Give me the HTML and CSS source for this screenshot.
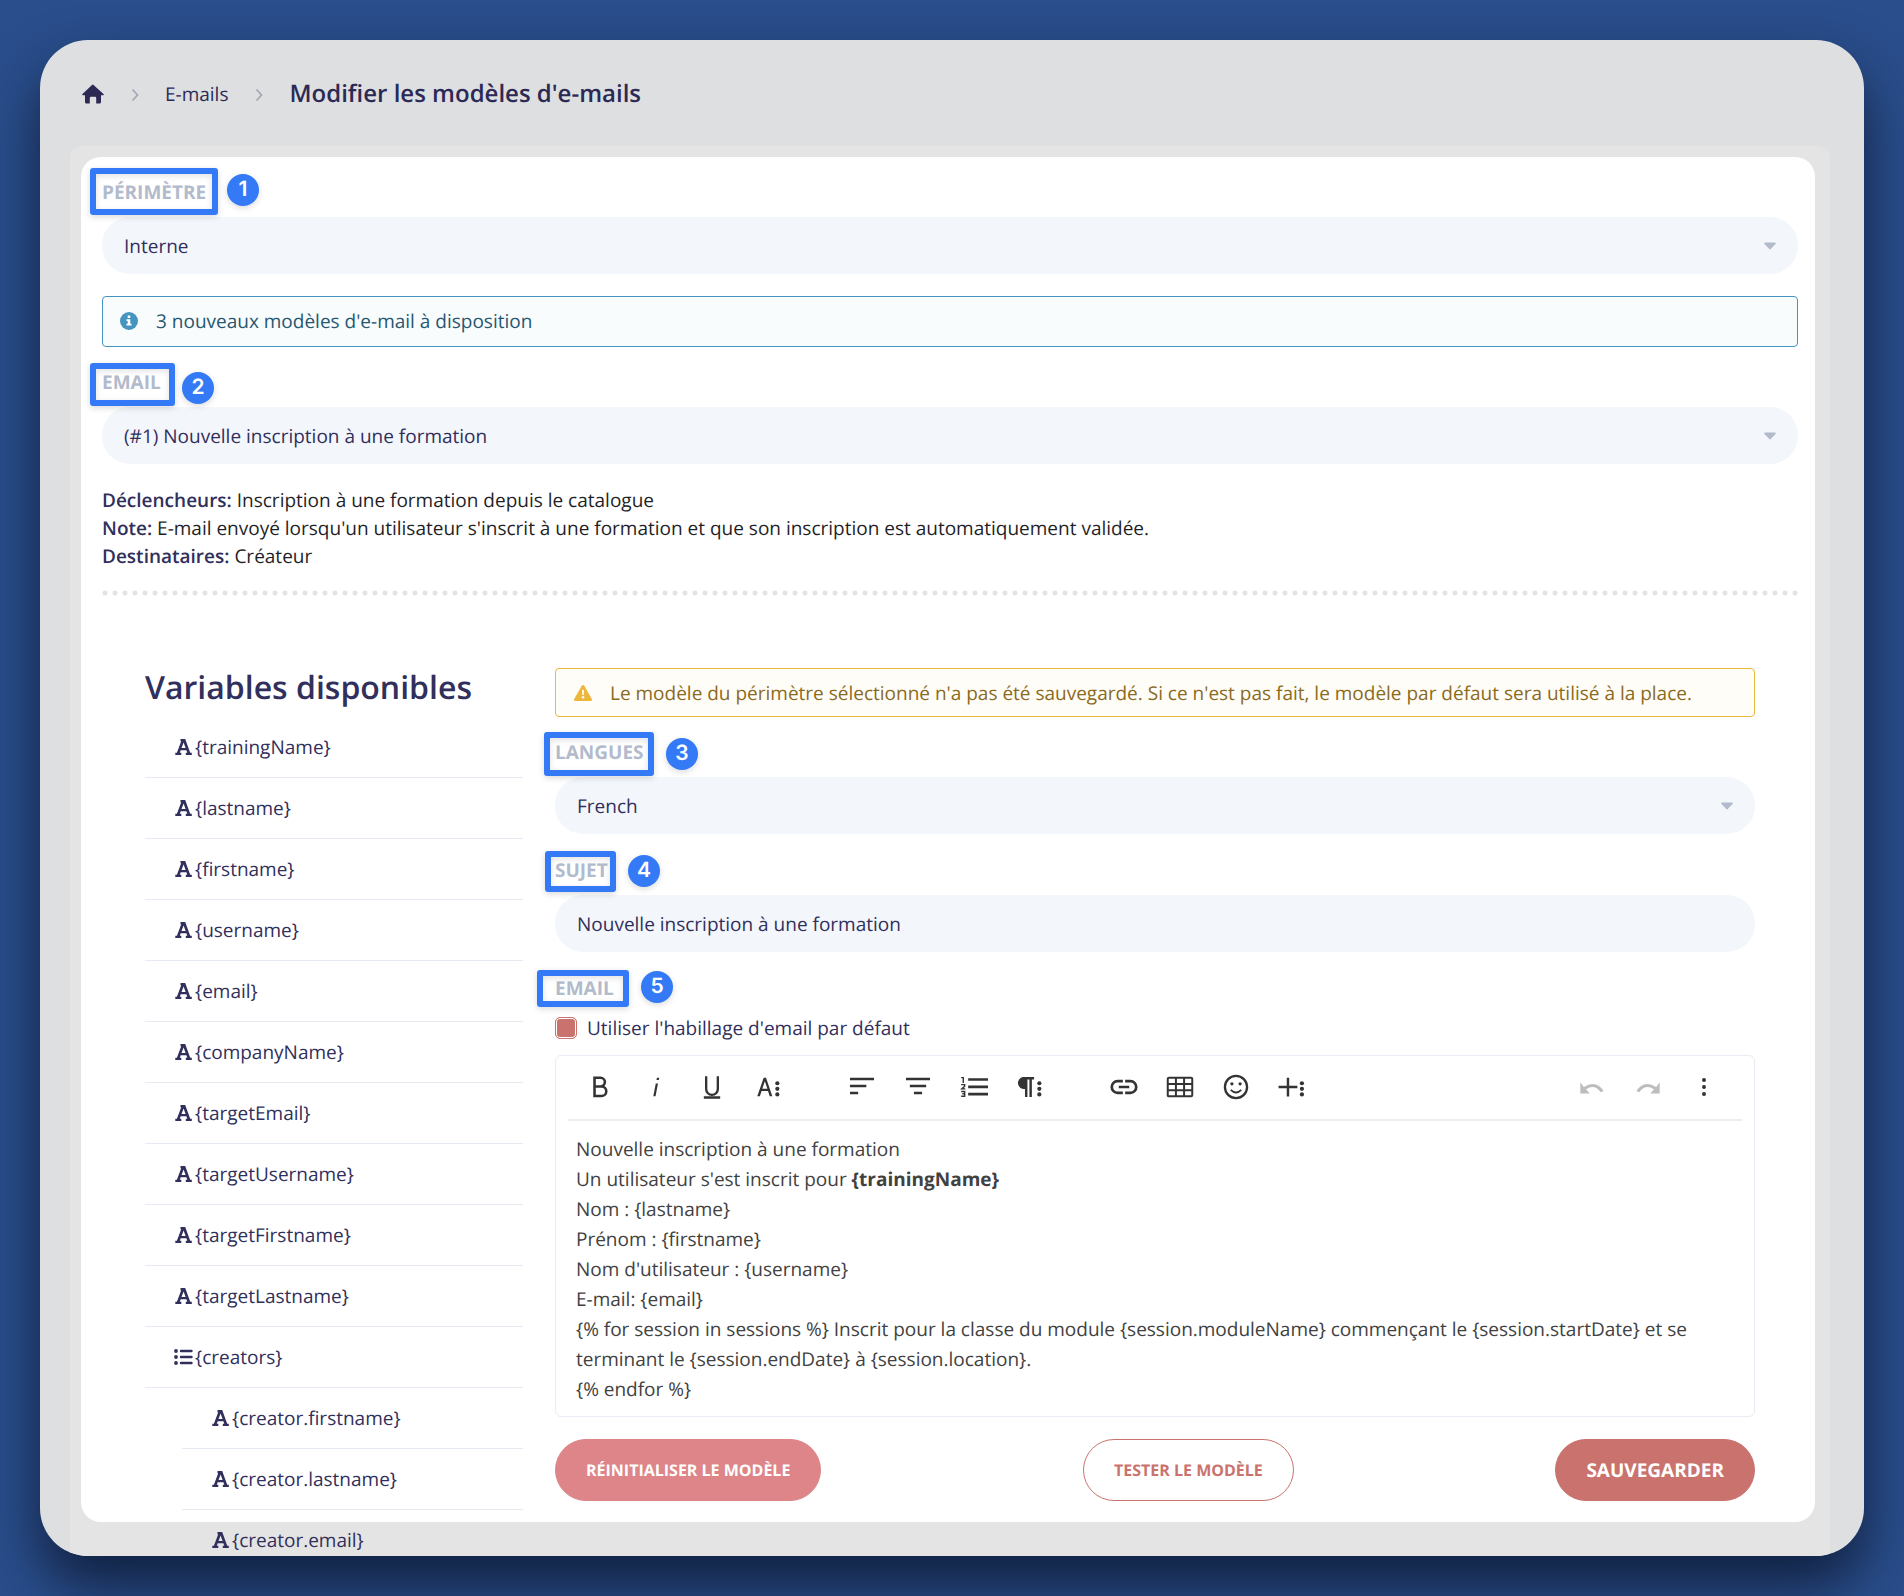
FILE: index.html
```
<!DOCTYPE html>
<html lang="fr">
  <head>
    <meta charset="UTF-8" />
    <meta name="viewport" content="width=device-width, initial-scale=1.0" />
    <title>Modifier les modèles d'e-mails</title>
    <link rel="stylesheet" href="styles.css">
  </head>
  <body>
    <svg class="sprite" aria-hidden="true">
      <symbol id="font" viewBox="0 0 19 18"><path d="M8 1h3.200l5 13.700h1.600V17h-6v-2.300h1.500l-.9-2.500H6.700l-.9 2.500h1.500V17h-6v-2.300h1.600L7.200 3.200H6.500V1zM9.600 4.600 7.500 10h4.100z"/></symbol>
      <symbol id="list" viewBox="0 0 19 18"><circle cx="2" cy="3" r="1.900"/><circle cx="2" cy="9" r="1.900"/><circle cx="2" cy="15" r="1.900"/><path fill="none" stroke="currentColor" stroke-width="2.400" stroke-linecap="round" d="M7 3h10.500M7 9h10.500M7 15h10.500"/></symbol>
      <symbol id="chevron" viewBox="0 0 8 14"><path d="M1.500 1.500 6.500 7l-5 5.500" fill="none" stroke="currentColor" stroke-width="1.700"/></symbol>
    </svg>

    <main class="window">
      <nav class="breadcrumb" aria-label="Fil d'Ariane">
        <a href="#" aria-label="Accueil">
          <svg width="22" height="20" viewBox="0 0 22 20"><path d="M11 .5 21.500 10q.8 1-.5 1.200h-2V18q0 1.500-1.500 1.500h-3.300V14q0-1.200-1.200-1.200h-4Q7.800 12.800 7.800 14v5.500H4.500Q3 19.500 3 18v-6.800H1Q-.3 11 .5 10L10 .9q1-.8 1.500 0z"/></svg>
        </a>
        <svg class="sep"><use href="#chevron"/></svg>
        <a href="#">E-mails</a>
        <svg class="sep"><use href="#chevron"/></svg>
        <h1>Modifier les modèles d'e-mails</h1>
      </nav>

      <div class="backdrop">
        <div class="card">
          <div class="field">
            <div class="field-head">
              <label for="scope">Périmètre</label>
              <span class="mark mark-1"></span><span class="badge badge-1">1</span>
            </div>
            <select id="scope"><option>Interne</option></select>
          </div>

          <div class="alert info">
            <svg width="18" height="18" viewBox="0 0 18 18"><circle cx="9" cy="9" r="9"/><path fill="#fff" d="M7.700 3.500h2.600V6H7.700zM6.500 7.200h3.800v4.600h1.200v1.700h-5v-1.700h1.200V8.900H6.500z"/></svg>
            <span>3 nouveaux modèles d'e-mail à disposition</span>
          </div>

          <div class="field">
            <div class="field-head">
              <label for="template">Email</label>
              <span class="mark mark-2"></span><span class="badge badge-2">2</span>
            </div>
            <select id="template"><option>(#1) Nouvelle inscription à une formation</option></select>
          </div>

          <div class="details">
            <p><strong>Déclencheurs:</strong> Inscription à une formation depuis le catalogue</p>
            <p><strong>Note:</strong> E-mail envoyé lorsqu'un utilisateur s'inscrit à une formation et que son inscription est automatiquement validée.</p>
            <p><strong>Destinataires:</strong> Créateur</p>
          </div>

          <svg class="dots" aria-hidden="true"><line x1="3" y1="3" x2="100%" y2="3"/></svg>

          <div class="columns">
            <aside class="variables">
              <h2>Variables disponibles</h2>
              <ul>
                <li><svg><use href="#font"/></svg>{trainingName}</li>
                <li><svg><use href="#font"/></svg>{lastname}</li>
                <li><svg><use href="#font"/></svg>{firstname}</li>
                <li><svg><use href="#font"/></svg>{username}</li>
                <li><svg><use href="#font"/></svg>{email}</li>
                <li><svg><use href="#font"/></svg>{companyName}</li>
                <li><svg><use href="#font"/></svg>{targetEmail}</li>
                <li><svg><use href="#font"/></svg>{targetUsername}</li>
                <li><svg><use href="#font"/></svg>{targetFirstname}</li>
                <li><svg><use href="#font"/></svg>{targetLastname}</li>
                <li><svg><use href="#list"/></svg>{creators}</li>
              </ul>
              <ul class="nested">
                <li><svg><use href="#font"/></svg>{creator.firstname}</li>
                <li><svg><use href="#font"/></svg>{creator.lastname}</li>
                <li><svg><use href="#font"/></svg>{creator.email}</li>
              </ul>
            </aside>

            <form class="editor-form">
              <div class="alert warning">
                <svg width="18" height="18" viewBox="0 0 18 18"><path d="M9 1q.8 0 1.300.8l7.500 13.200q.7 2-1.300 2h-15q-2 0-1.300-2L7.700 1.800Q8.200 1 9 1z"/><path fill="#fff" d="M8 6h2l-.3 5H8.300z"/><circle cx="9" cy="13.300" r="1.300" fill="#fff"/></svg>
                <span>Le modèle du périmètre sélectionné n'a pas été sauvegardé. Si ce n'est pas fait, le modèle par défaut sera utilisé à la place.</span>
              </div>

              <div class="field">
                <div class="field-head">
                  <label for="lang">Langues</label>
                  <span class="mark mark-3"></span><span class="badge badge-3">3</span>
                </div>
                <select id="lang"><option>French</option></select>
              </div>

              <div class="field">
                <div class="field-head">
                  <label for="subject">Sujet</label>
                  <span class="mark mark-4"></span><span class="badge badge-4">4</span>
                </div>
                <input type="text" id="subject" value="Nouvelle inscription à une formation">
              </div>

              <div class="field-head">
                <span class="label" id="body-label">Email</span>
                <span class="mark mark-5"></span><span class="badge badge-5">5</span>
              </div>
              <div class="check">
                <input type="checkbox" id="skin" checked>
                <label for="skin">Utiliser l'habillage d'email par défaut</label>
              </div>

              <div class="editor">
                <div class="toolbar">
                  <div class="tools">
                    <button type="button" aria-label="Gras"><svg viewBox="0 0 24 24"><path fill="none" stroke="currentColor" stroke-width="2.200" d="M7.300 4.100h5.200a3.700 3.700 0 0 1 0 7.400H7.300zM7.300 11.500h6a4.100 4.100 0 0 1 0 8.200h-6z"/></svg></button>
                    <button type="button" aria-label="Italique"><svg viewBox="0 0 24 24"><path d="M11.800 9h1.900l-2.100 11H9.700zM12.800 4h2l-.4 2h-2z"/></svg></button>
                    <button type="button" aria-label="Souligné"><svg viewBox="0 0 24 24"><path d="M19 20v2H5v-2zM16 13.800v-11h2v11a6 6 0 0 1-12 0v-11h2v11a4 4 0 0 0 8 0z"/></svg></button>
                    <button type="button" aria-label="Plus de texte"><svg viewBox="0 0 24 24"><path d="M13.500 20h2.200L10.300 4h-2L2.800 20H5l1.500-4.500H12zM7.100 13.600 9.300 7l2.200 6.600z"/><circle cx="20" cy="8.800" r="1.800"/><circle cx="20" cy="13.600" r="1.800"/><circle cx="20" cy="18.400" r="1.800"/></svg></button>
                  </div>
                  <div class="tools">
                    <button type="button" aria-label="Aligner à gauche"><svg viewBox="0 0 24 24"><path d="M1.700 4h20.600v2.200H1.700zM1.700 10h14v2.200h-14zM1.700 16h7v2.200h-7z"/></svg></button>
                    <button type="button" aria-label="Centrer"><svg viewBox="0 0 24 24"><path d="M1.700 4h20.600v2.200H1.700zM5 10h14v2.200H5zM8.500 16h7v2.200h-7z"/></svg></button>
                    <button type="button" aria-label="Liste numérotée"><svg viewBox="0 0 24 24"><path d="M7 4.500h17v2.200H7zM7 10.800h17V13H7zM7 17h17v2.200H7z"/><path fill="none" stroke="currentColor" stroke-width="1.200" d="M1 4h1.800v4.500M1 10h3v1.300L1.400 13.600H4.500M1 15.800h3v4.100H1M2 17.800h2"/></svg></button>
                    <button type="button" aria-label="Plus de paragraphe"><svg viewBox="0 0 24 24"><path d="M6 3.500h9.500v2h-1.900v15h-2.100v-15h-1.700v15H7.700v-6.800A5 5 0 0 1 6 3.500z"/><circle cx="20" cy="8.800" r="1.800"/><circle cx="20" cy="13.600" r="1.800"/><circle cx="20" cy="18.400" r="1.800"/></svg></button>
                  </div>
                  <div class="tools">
                    <button type="button" aria-label="Lien"><svg viewBox="0 0 24 24"><path fill="none" stroke="currentColor" stroke-width="2.300" d="M11 7H6.500a5 5 0 0 0 0 10H11M13 7h4.500a5 5 0 0 1 0 10H13M7.500 12h9"/></svg></button>
                    <button type="button" aria-label="Tableau"><svg viewBox="0 0 24 24"><path fill="none" stroke="currentColor" stroke-width="1.700" d="M2.500 4h19q1 0 1 1v14q0 1-1 1h-19q-1 0-1-1V5q0-1 1-1zM1.500 9.400h21M1.500 14.700h21M8.500 4v16M15.500 4v16"/></svg></button>
                    <button type="button" aria-label="Émoticônes"><svg viewBox="0 0 24 24"><circle cx="12" cy="12" r="9.500" fill="none" stroke="currentColor" stroke-width="2"/><circle cx="8.500" cy="9.300" r="1.400"/><circle cx="15.500" cy="9.300" r="1.400"/><path fill="none" stroke="currentColor" stroke-width="1.600" d="M7.500 14.500q4.500 4.500 9 0"/></svg></button>
                    <button type="button" aria-label="Plus d'options"><svg viewBox="0 0 24 24"><path d="M7.500 4h2.100v7h7v2.100h-7v7H7.500v-7h-7V11h7z"/><circle cx="20.500" cy="8.800" r="1.800"/><circle cx="20.500" cy="13.600" r="1.800"/><circle cx="20.500" cy="18.400" r="1.800"/></svg></button>
                  </div>
                  <div class="tools end">
                    <button type="button" aria-label="Annuler" disabled><svg viewBox="0 0 24 24"><path d="M2 8v9.500h8L7 14q7-5 12.500 2.500l2.500-1Q15.500 5.500 5 12z"/></svg></button>
                    <button type="button" aria-label="Rétablir" disabled><svg viewBox="0 0 24 24"><path d="M22 8v9.500h-8l3-3.500q-7-5-12.500 2.500l-2.500-1Q8.500 5.500 19 12z"/></svg></button>
                    <button type="button" aria-label="Plus"><svg viewBox="0 0 24 24"><circle cx="12" cy="6" r="1.700"/><circle cx="12" cy="12" r="1.700"/><circle cx="12" cy="18" r="1.700"/></svg></button>
                  </div>
                </div>
                <div class="content" contenteditable="true" role="textbox" aria-labelledby="body-label">
                  <p>Nouvelle inscription à une formation</p>
                  <p>Un utilisateur s'est inscrit pour <b>{trainingName}</b></p>
                  <p>Nom : {lastname}</p>
                  <p>Prénom : {firstname}</p>
                  <p>Nom d'utilisateur : {username}</p>
                  <p>E-mail: {email}</p>
                  <p>{% for session in sessions %} Inscrit pour la classe du module {session.moduleName} commençant le {session.startDate} et se terminant le {session.endDate} à {session.location}.</p>
                  <p>{% endfor %}</p>
                </div>
              </div>

              <div class="actions">
                <button type="button" class="btn reset">Réinitialiser le modèle</button>
                <button type="button" class="btn outline">Tester le modèle</button>
                <button type="submit" class="btn save">Sauvegarder</button>
              </div>
            </form>
          </div>
        </div>
      </div>
    </main>
  </body>
</html>
```
FILE: styles.css
```
* {
  margin: 0;
  padding: 0;
  box-sizing: border-box;
}

body {
  height: 100vh;
  padding: 40px;
  overflow: hidden;
  background-color: #2a4e8c;
  color: #312f5b;
  font-family: "Open Sans", sans-serif;
  font-size: 19px;
  line-height: 28px;
  text-rendering: geometricPrecision;
}

button,
input,
select {
  font: inherit;
  color: inherit;
  text-rendering: inherit;
}

.sprite {
  position: absolute;
  width: 0;
  height: 0;
}

.window {
  display: flex;
  flex-direction: column;
  height: 100%;
  overflow: hidden;
  border-radius: 48px;
  background-color: #dedfe1;
  box-shadow: 0 30px 56px rgba(8, 18, 38, 0.75);
}

.breadcrumb {
  display: flex;
  flex: none;
  align-items: center;
  height: 106px;
  padding: 2px 42px 0;
  color: #2c2a55;
}

.breadcrumb a {
  color: inherit;
  text-decoration: none;
}

.breadcrumb a svg {
  display: block;
  fill: currentColor;
}

.breadcrumb h1 {
  font-size: 24px;
  font-weight: 600;
}

.sep {
  width: 8px;
  height: 14px;
  margin: 2px 26px 0 27px;
  color: #a3a7b3;
}

.backdrop {
  flex: 1;
  min-height: 0;
  margin: 0 34px 0 30px;
  padding: 11px 15px 34px 11px;
  border-radius: 12px 12px 0 0;
  background-color: #e4e4e4;
}

.card {
  height: 100%;
  padding: 19px 17px 0 21px;
  border-radius: 20px;
  background-color: #fff;
}

.field {
  margin-bottom: 22px;
}

.field-head {
  position: relative;
  height: 41px;
}

.field-head label,
.label {
  display: block;
  line-height: 32px;
  font-weight: 700;
  text-transform: uppercase;
  color: #b2bbcb;
}

.field select,
.field input {
  display: block;
  width: 100%;
  height: 57px;
  padding: 0 22px;
  border: none;
  border-radius: 28px;
  background-color: #f3f6fb;
  appearance: none;
}

.field select {
  background-image: url("data:image/svg+xml,%3Csvg xmlns='http://www.w3.org/2000/svg' viewBox='0 0 12 8'%3E%3Cpath fill='%23b2bbcb' d='M1 .5h10q1.200.5.500 1.500L6.500 7.200q-.5.500-1 0L.5 2Q-.2 1 1 .5z'/%3E%3C/svg%3E");
  background-repeat: no-repeat;
  background-position: right 22px center;
  background-size: 12px 8px;
}

/* numbered callouts laid over the labels */
.mark {
  position: absolute;
  border: 6px solid #347af6;
  border-radius: 3px;
  box-shadow: 0 2px 6px rgba(0, 0, 0, 0.15), inset 0 2px 6px rgba(0, 0, 0, 0.12);
}

.badge {
  position: absolute;
  width: 32px;
  height: 32px;
  border-radius: 50%;
  background-color: #347af6;
  box-shadow: 0 2px 6px rgba(0, 0, 0, 0.15);
  color: #fff;
  font-family: Inter, sans-serif;
  font-size: 21px;
  font-weight: 600;
  line-height: 32px;
  text-align: center;
}

.mark-1 { left: -12px; top: -8px; width: 128px; height: 47px; }
.badge-1 { left: 125px; top: -2px; }
.mark-2 { left: -12px; top: -3px; width: 85px; height: 43px; }
.badge-2 { left: 80px; top: 6px; }
.mark-3 { left: -11px; top: -4px; width: 110px; height: 44px; }
.badge-3 { left: 111px; top: 2px; }
.mark-4 { left: -10px; top: -3px; width: 71px; height: 41px; }
.badge-4 { left: 73px; top: 1px; }
.mark-5 { left: -18px; top: -2px; width: 92px; height: 37px; }
.badge-5 { left: 86px; top: -1px; }

.alert {
  display: flex;
  align-items: center;
  border: 1px solid;
  border-radius: 4px;
}

.alert svg {
  flex: none;
  margin-right: 18px;
  fill: currentColor;
}

.info {
  height: 51px;
  margin-bottom: 19px;
  padding: 0 17px 2px;
  border-color: #4695c0;
  background-color: #f8fcfd;
  color: #4695c0;
}

.info span {
  color: #27566f;
}

.warning {
  height: 49px;
  margin-bottom: 19px;
  padding: 0 18px;
  border-color: #ecb73b;
  background-color: #fffdf8;
  color: #ecb73b;
}

.warning span {
  color: #8a6a1d;
}

.details {
  margin-bottom: 20px;
  color: #1f1f27;
}

.details strong {
  font-weight: 600;
  color: #312f5b;
}

.dots {
  display: block;
  width: 100%;
  height: 6px;
}

.dots line {
  stroke: #e3e3e5;
  stroke-width: 5;
  stroke-linecap: round;
  stroke-dasharray: 0 10;
}

.columns {
  display: flex;
  gap: 32px;
  padding: 72px 43px 0;
}

.variables {
  flex: none;
  width: 378px;
}

.variables h2 {
  margin-bottom: 9px;
  font-size: 32px;
  font-weight: 600;
  line-height: 40px;
}

.variables ul {
  list-style: none;
}

.variables li {
  display: flex;
  align-items: center;
  gap: 2px;
  height: 61px;
  padding-left: 29px;
  border-bottom: 1px solid #e6eaf3;
}

.variables svg {
  width: 19px;
  height: 18px;
  fill: currentColor;
}

.variables .nested {
  margin-left: 37px;
}

.editor-form {
  flex: 1;
  min-width: 0;
}

.editor-form .field {
  margin-bottom: 20px;
}

.check {
  display: flex;
  align-items: center;
  gap: 10px;
  height: 30px;
}

.check input {
  width: 22px;
  height: 22px;
  border: 1px solid #ca736e;
  border-radius: 5px;
  background-color: #ca736e;
  box-shadow: inset 0 0 0 1px #fff;
  appearance: none;
}

.editor {
  margin: 12px 0 22px;
  border: 1px solid #e9ecf4;
  border-radius: 6px;
}

.toolbar {
  display: flex;
  gap: 38px;
  height: 65px;
  margin: 0 12px;
  padding: 0 10px 2px 4px;
  border-bottom: 2px solid #eee;
}

.tools {
  display: flex;
  align-items: center;
}

.tools button {
  width: 56px;
  height: 56px;
  border: none;
  background: none;
  color: #333;
}

.tools button:disabled {
  color: #bdbdbd;
}

.tools svg {
  display: block;
  width: 28px;
  height: 28px;
  margin: 0 auto;
  fill: currentColor;
}

.tools.end {
  margin-left: auto;
}

.content {
  padding: 13px 20px 12px;
  color: #414141;
  line-height: 30px;
}

.actions {
  display: flex;
  justify-content: space-between;
}

.btn {
  height: 62px;
  padding: 0 30px;
  border: 1px solid #ca736e;
  border-radius: 31px;
  font-size: 16px;
  font-weight: 700;
  text-transform: uppercase;
}

.reset {
  border-color: #dd8588;
  background-color: #dd8588;
  color: #fff;
}

.outline {
  background-color: #fff;
  color: #ca736e;
}

.save {
  background-color: #ca736e;
  color: #fff;
  font-size: 19px;
}
```
